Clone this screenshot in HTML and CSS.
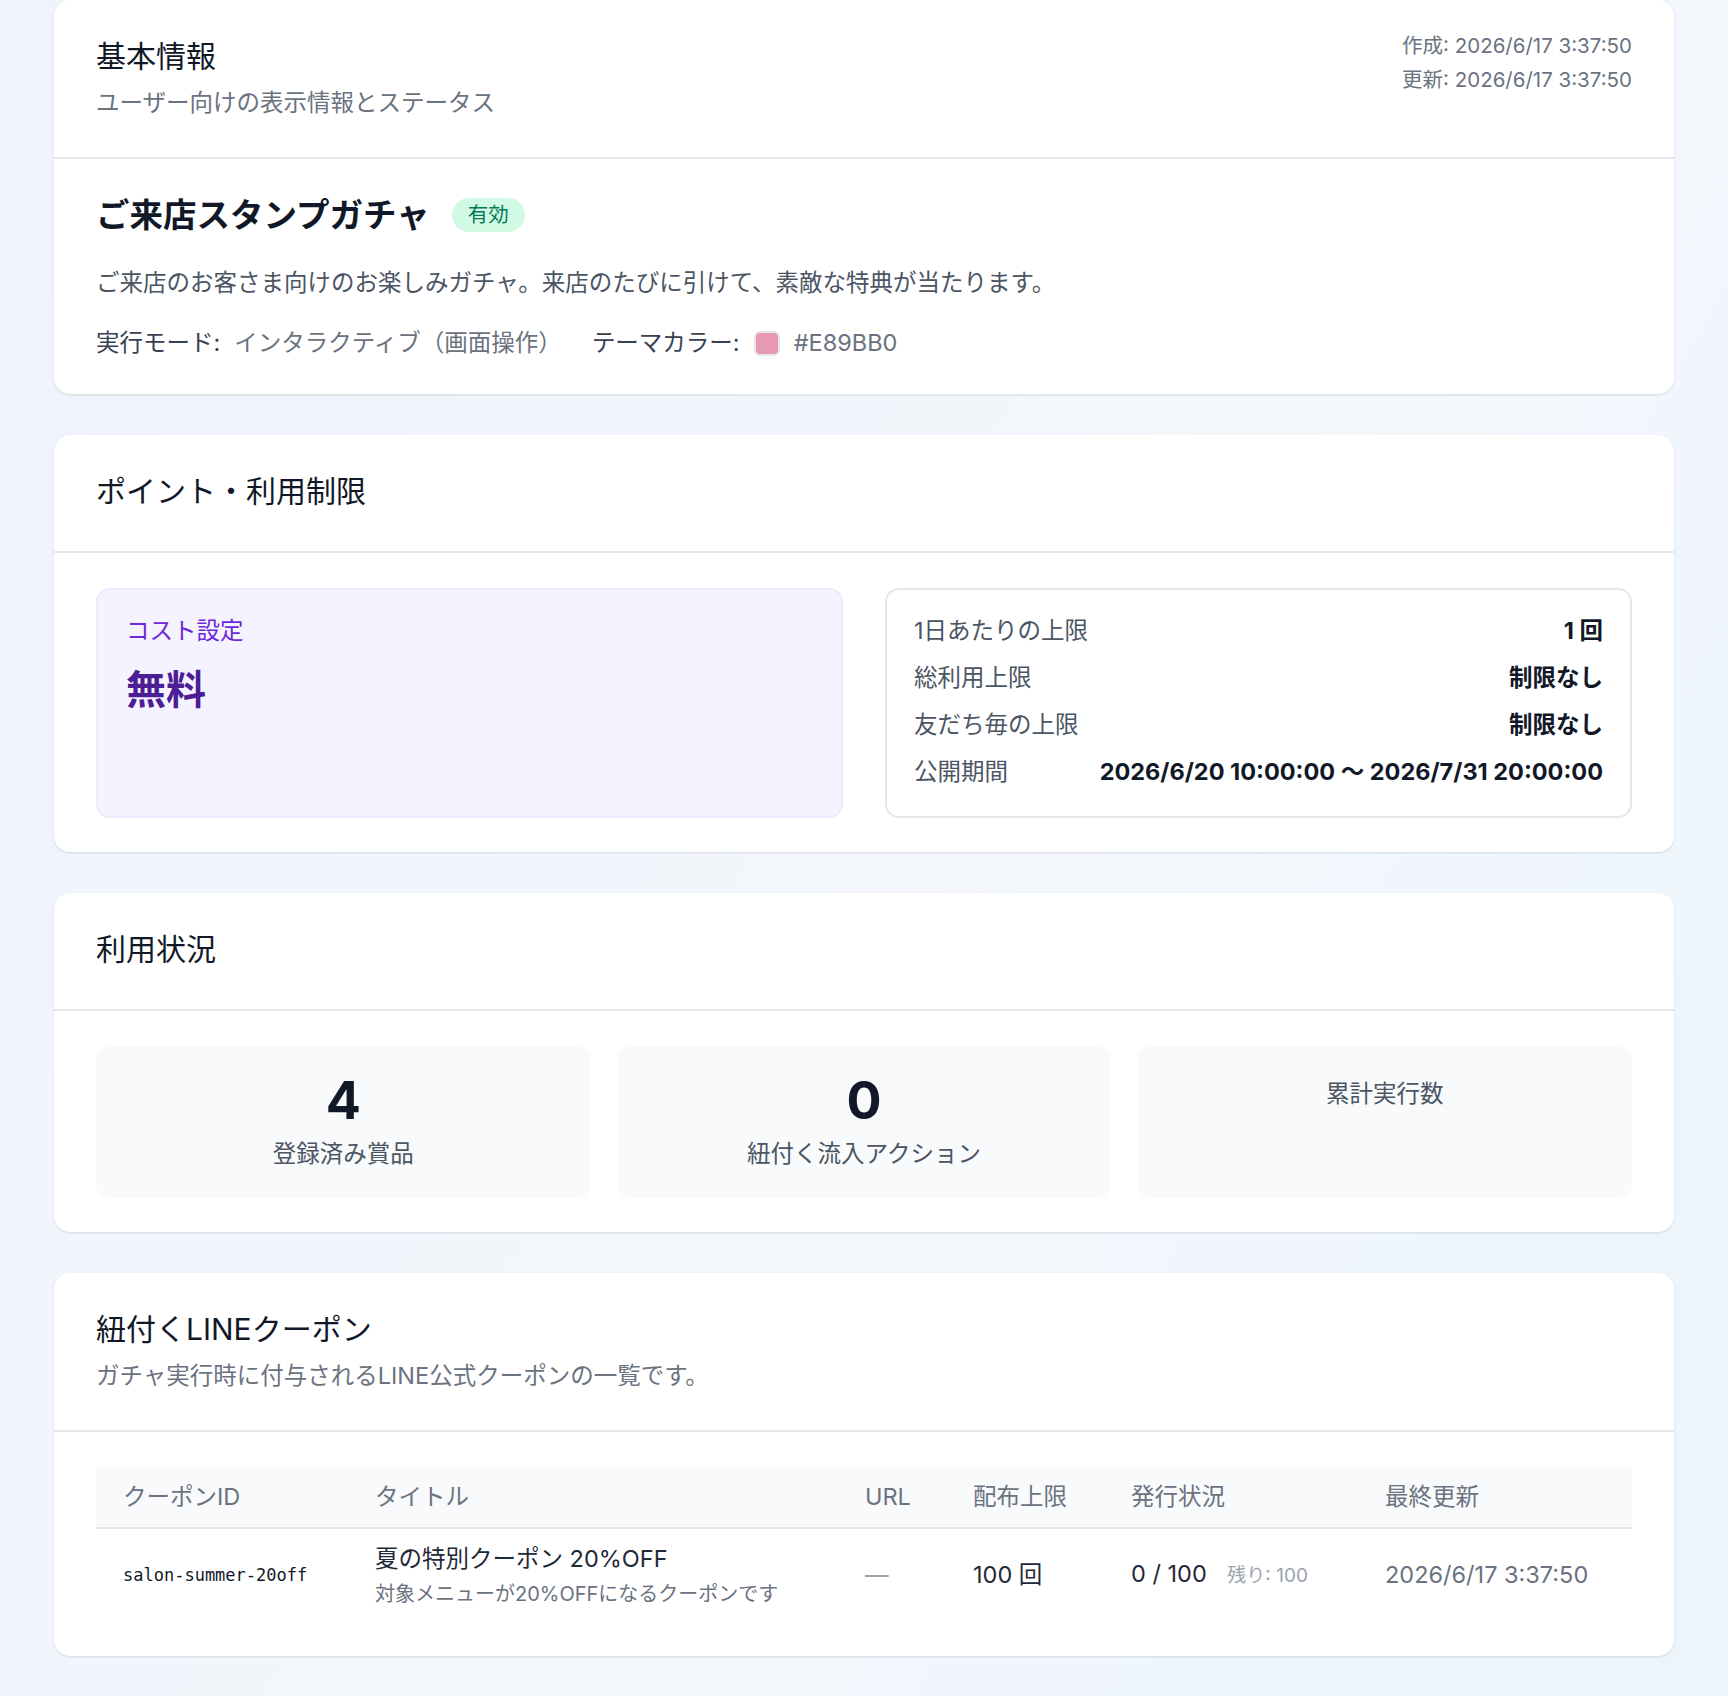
FILE: index.html
```html
<!DOCTYPE html>
<html lang="ja">
<head>
  <meta charset="UTF-8">
  <title>ご来店スタンプガチャ</title>
  <meta name="viewport" content="width=device-width, initial-scale=1.0">
  <link rel="stylesheet" href="styles.css">
</head>
<body>

<div class="page">

  <section class="card">
    <div class="card-header header-split">
      <div>
        <h2>基本情報</h2>
        <p class="sub">ユーザー向けの表示情報とステータス</p>
      </div>
      <div class="meta">
        <div>作成: 2026/6/17 3:37:50</div>
        <div>更新: 2026/6/17 3:37:50</div>
      </div>
    </div>
    <div class="card-body">
      <div class="title-row">
        <h1>ご来店スタンプガチャ</h1>
        <span class="badge">有効</span>
      </div>
      <p class="desc">ご来店のお客さま向けのお楽しみガチャ。来店のたびに引けて、素敵な特典が当たります。</p>
      <div class="props">
        <div class="prop">
          <span class="prop-label">実行モード:</span>
          <span class="prop-value">インタラクティブ（画面操作）</span>
        </div>
        <div class="prop">
          <span class="prop-label">テーマカラー:</span>
          <span class="swatch" style="background:#E89BB0"></span>
          <span class="prop-value">#E89BB0</span>
        </div>
      </div>
    </div>
  </section>

  <section class="card">
    <div class="card-header">
      <h2>ポイント・利用制限</h2>
    </div>
    <div class="card-body">
      <div class="limits">
        <div class="cost-box">
          <div class="cost-label">コスト設定</div>
          <div class="cost-value">無料</div>
        </div>
        <div class="limit-box">
          <div class="limit-row"><span>1日あたりの上限</span><strong>1 回</strong></div>
          <div class="limit-row"><span>総利用上限</span><strong>制限なし</strong></div>
          <div class="limit-row"><span>友だち毎の上限</span><strong>制限なし</strong></div>
          <div class="limit-row"><span>公開期間</span><strong>2026/6/20 10:00:00 〜 2026/7/31 20:00:00</strong></div>
        </div>
      </div>
    </div>
  </section>

  <section class="card">
    <div class="card-header">
      <h2>利用状況</h2>
    </div>
    <div class="card-body">
      <div class="stats">
        <div class="stat">
          <div class="stat-value">4</div>
          <div class="stat-label">登録済み賞品</div>
        </div>
        <div class="stat">
          <div class="stat-value">0</div>
          <div class="stat-label">紐付く流入アクション</div>
        </div>
        <div class="stat">
          <div class="stat-value"></div>
          <div class="stat-label">累計実行数</div>
        </div>
      </div>
    </div>
  </section>

  <section class="card">
    <div class="card-header">
      <h2>紐付くLINEクーポン</h2>
      <p class="sub">ガチャ実行時に付与されるLINE公式クーポンの一覧です。</p>
    </div>
    <div class="card-body">
      <table class="coupons">
        <colgroup>
          <col class="c-id"><col class="c-title"><col class="c-url"><col class="c-max"><col class="c-status"><col class="c-date">
        </colgroup>
        <thead>
          <tr>
            <th>クーポンID</th>
            <th>タイトル</th>
            <th>URL</th>
            <th>配布上限</th>
            <th>発行状況</th>
            <th>最終更新</th>
          </tr>
        </thead>
        <tbody>
          <tr>
            <td class="mono">salon-summer-20off</td>
            <td>
              <div class="coupon-title">夏の特別クーポン 20%OFF</div>
              <div class="coupon-desc">対象メニューが20%OFFになるクーポンです</div>
            </td>
            <td class="muted">—</td>
            <td>100 回</td>
            <td>0 / 100 <span class="remain">残り: 100</span></td>
            <td class="date">2026/6/17 3:37:50</td>
          </tr>
        </tbody>
      </table>
    </div>
  </section>

</div>

</body>
</html>
```

FILE: styles.css
```css
* {
  box-sizing: border-box;
}

body {
  margin: 0;
  padding: 0;
  background: linear-gradient(120deg, #eef3fc 0%, #f3f7fc 55%, #ebf5fb 100%);
  font-family: 'Inter', 'Noto Sans CJK JP', sans-serif;
  color: #111827;
  min-height: 100vh;
}

.page {
  padding: 0 54px 41px;
  display: flex;
  flex-direction: column;
  gap: 41px;
}

.card {
  background: white;
  border-radius: 16px;
  box-shadow: 0 1px 3px rgba(15, 23, 42, 0.08), 0 1px 2px rgba(15, 23, 42, 0.05);
}

.card-header {
  padding: 33px 42px 37px;
  border-bottom: 2px solid #e5e7eb;
}

.header-split {
  display: flex;
  justify-content: space-between;
  align-items: flex-start;
}

.card-header h2 {
  margin: 0;
  font-size: 30px;
  line-height: 46px;
  font-weight: 400;
  color: #111827;
}

.sub {
  margin: 7px 0 0;
  font-size: 23.5px;
  line-height: 34px;
  color: #6b7280;
}

.meta {
  margin-top: -4px;
  text-align: right;
  font-size: 20.5px;
  line-height: 34px;
  color: #6b7280;
}

.card-body {
  padding: 35px 42px 34px;
}

.title-row {
  display: flex;
  align-items: center;
  gap: 22px;
}

.title-row h1 {
  margin: 0;
  font-size: 33.5px;
  line-height: 42px;
  font-weight: 700;
  color: #111827;
}

.badge {
  background: #d1fae5;
  color: #047857;
  font-size: 20.5px;
  line-height: 34px;
  padding: 0 16px;
  border-radius: 999px;
}

.desc {
  margin: 30px 0 0;
  font-size: 23.5px;
  line-height: 34px;
  color: #4b5563;
}

.props {
  margin-top: 26px;
  display: flex;
  align-items: center;
  gap: 30px;
  font-size: 23.5px;
  line-height: 34px;
}

.prop {
  display: flex;
  align-items: center;
  gap: 14px;
}

.prop-label {
  color: #374151;
}

.prop-value {
  color: #6b7280;
}

.swatch {
  display: inline-block;
  width: 26px;
  height: 25px;
  border-radius: 6px;
  border: 2px solid #e5e7eb;
}

.limits {
  display: grid;
  grid-template-columns: 1fr 1fr;
  gap: 42px;
}

.cost-box {
  background: #f5f3ff;
  border: 2px solid #ede9fe;
  border-radius: 14px;
  padding: 24px 28px;
}

.cost-label {
  font-size: 23.5px;
  line-height: 34px;
  color: #6d28d9;
}

.cost-value {
  margin-top: 16px;
  font-size: 40px;
  line-height: 52px;
  font-weight: 700;
  color: #4c1d95;
}

.limit-box {
  border: 2px solid #e5e7eb;
  border-radius: 14px;
  padding: 24px 27px 27px;
  display: flex;
  flex-direction: column;
  gap: 13px;
}

.limit-row {
  display: flex;
  justify-content: space-between;
  font-size: 23.5px;
  line-height: 34px;
}

.limit-row span {
  color: #4b5563;
}

.limit-row strong {
  font-weight: 700;
  color: #111827;
}

.stats {
  display: grid;
  grid-template-columns: repeat(3, 1fr);
  gap: 26px;
}

.stat {
  background: #f9fafb;
  border-radius: 14px;
  padding: 25px 20px 27px;
  text-align: center;
}

.stat-value {
  font-size: 52px;
  line-height: 60px;
  font-weight: 700;
  color: #111827;
  margin-bottom: 6px;
}

.stat-label {
  font-size: 23.5px;
  line-height: 34px;
  color: #4b5563;
}

.coupons {
  width: 100%;
  border-collapse: collapse;
  table-layout: fixed;
  font-size: 23.5px;
  line-height: 34px;
}

.c-id { width: 279px; }
.c-title { width: 490px; }
.c-url { width: 108px; }
.c-max { width: 158px; }
.c-status { width: 254px; }

.coupons th {
  background: #f9fafb;
  text-align: left;
  font-weight: 400;
  color: #6b7280;
  padding: 13px 0;
  border-bottom: 2px solid #e5e7eb;
}

.coupons th:first-child,
.coupons td:first-child {
  padding-left: 27px;
}

.coupons td {
  padding: 13px 0 14px;
  vertical-align: middle;
  color: #1f2937;
}

.coupons td.mono {
  font-family: 'DejaVu Sans Mono', monospace;
  font-size: 17px;
  color: #111827;
}

.coupon-title {
  color: #1f2937;
}

.coupon-desc {
  margin-top: 4px;
  font-size: 20px;
  line-height: 28px;
  color: #6b7280;
}

.coupons td.muted {
  color: #9ca3af;
}

.remain {
  margin-left: 14px;
  font-size: 19px;
  color: #9ca3af;
}

.coupons td.date {
  color: #6b7280;
}
```
